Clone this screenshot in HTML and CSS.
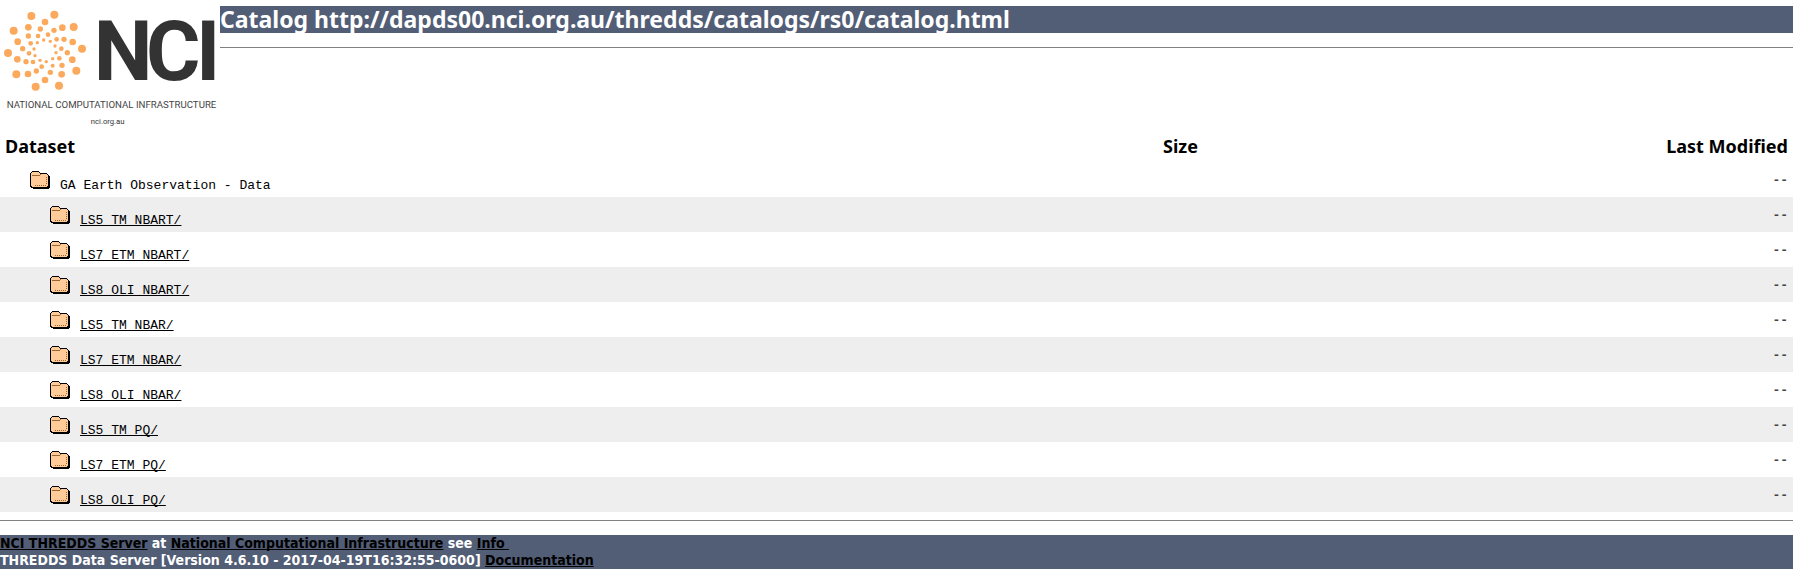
FILE: index.html
```
<!DOCTYPE html>
<html lang="en">
<head>
<meta charset="utf-8">
<title>Catalog http://dapds00.nci.org.au/thredds/catalogs/rs0/catalog.html</title>
<link rel="stylesheet" href="styles.css">
</head>
<body>
<svg class="defs" aria-hidden="true">
  <symbol id="folder" viewBox="0 0 20 18">
    <path fill="#000" d="M2 0h7v1h1v1h7v1h1v1h1v1h1v12h-1v1H3v-1H1v-1H0V2h1V1h1z"/>
    <path fill="#ffcc99" d="M2 1h7v1h1v1h7v1h1v11h-1v1H2v-1H1V2h1z"/>
    <path stroke="#996633" fill="none" d="M2 4.500h8M10 3.500h1"/>
    <path stroke="#996633" fill="none" stroke-dasharray="1 1" d="M5 14.500h12M16.500 6v8"/>
  </symbol>
</svg>
<header class="top">
  <svg class="logo" viewBox="0 0 660 390" role="img" aria-label="NCI National Computational Infrastructure">
    <g fill="#fba95c">
      <g><circle cx="94" cy="48" r="12"/><circle cx="163" cy="44" r="12"/><circle cx="221" cy="81" r="12"/><circle cx="246" cy="146" r="12"/><circle cx="229" cy="212" r="12"/><circle cx="177" cy="257" r="12"/><circle cx="107" cy="260" r="12"/><circle cx="49" cy="223" r="12"/><circle cx="24" cy="159" r="12"/><circle cx="41" cy="92" r="12"/></g>
      <g><circle cx="135" cy="66" r="10"/><circle cx="187" cy="83" r="10"/><circle cx="218" cy="126" r="10"/><circle cx="217" cy="179" r="10"/><circle cx="185" cy="223" r="10"/><circle cx="135" cy="240" r="10"/><circle cx="84" cy="222" r="10"/><circle cx="52" cy="178" r="10"/><circle cx="53" cy="125" r="10"/><circle cx="85" cy="82" r="10"/></g>
      <g><circle cx="121" cy="87" r="8"/><circle cx="162" cy="91" r="8"/><circle cx="192" cy="118" r="8"/><circle cx="202" cy="158" r="8"/><circle cx="186" cy="196" r="8"/><circle cx="151" cy="217" r="8"/><circle cx="109" cy="213" r="8"/><circle cx="78" cy="185" r="8"/><circle cx="68" cy="146" r="8"/><circle cx="85" cy="108" r="8"/></g>
      <g><circle cx="114" cy="108" r="7"/><circle cx="144" cy="104" r="7"/><circle cx="170" cy="118" r="7"/><circle cx="184" cy="146" r="7"/><circle cx="178" cy="175" r="7"/><circle cx="158" cy="197" r="6"/><circle cx="125" cy="200" r="7"/><circle cx="99" cy="186" r="7"/><circle cx="87" cy="160" r="7"/><circle cx="92" cy="130" r="7"/></g>
      <g><circle cx="131" cy="120" r="5"/><circle cx="151" cy="124" r="5"/><circle cx="165" cy="138" r="5"/><circle cx="168" cy="158" r="5"/><circle cx="158" cy="176" r="5"/><circle cx="139" cy="185" r="5"/><circle cx="120" cy="181" r="5"/><circle cx="105" cy="167" r="5"/><circle cx="102" cy="147" r="5"/><circle cx="112" cy="128" r="5"/></g>
    </g>
    <text class="logo-name" x="281 438 588" y="241">NCI</text>
    <text class="logo-tag" x="20" y="325">NATIONAL COMPUTATIONAL INFRASTRUCTURE</text>
    <text class="logo-url" x="323" y="371">nci.org.au</text>
  </svg>
  <div class="heading">
    <h1>Catalog http://dapds00.nci.org.au/thredds/catalogs/rs0/catalog.html</h1>
    <hr>
  </div>
</header>
<table class="catalog">
  <thead>
    <tr><th class="name" scope="col">Dataset</th><th class="size" scope="col">Size</th><th class="date" scope="col">Last Modified</th></tr>
  </thead>
  <tbody>
    <tr><td class="root"><div class="entry"><svg class="folder"><use href="#folder"/></svg><span>GA Earth Observation - Data</span></div></td><td></td><td class="date">--</td></tr>
    <tr><td><div class="entry"><svg class="folder"><use href="#folder"/></svg><a href="#">LS5_TM_NBART/</a></div></td><td></td><td class="date">--</td></tr>
    <tr><td><div class="entry"><svg class="folder"><use href="#folder"/></svg><a href="#">LS7_ETM_NBART/</a></div></td><td></td><td class="date">--</td></tr>
    <tr><td><div class="entry"><svg class="folder"><use href="#folder"/></svg><a href="#">LS8_OLI_NBART/</a></div></td><td></td><td class="date">--</td></tr>
    <tr><td><div class="entry"><svg class="folder"><use href="#folder"/></svg><a href="#">LS5_TM_NBAR/</a></div></td><td></td><td class="date">--</td></tr>
    <tr><td><div class="entry"><svg class="folder"><use href="#folder"/></svg><a href="#">LS7_ETM_NBAR/</a></div></td><td></td><td class="date">--</td></tr>
    <tr><td><div class="entry"><svg class="folder"><use href="#folder"/></svg><a href="#">LS8_OLI_NBAR/</a></div></td><td></td><td class="date">--</td></tr>
    <tr><td><div class="entry"><svg class="folder"><use href="#folder"/></svg><a href="#">LS5_TM_PQ/</a></div></td><td></td><td class="date">--</td></tr>
    <tr><td><div class="entry"><svg class="folder"><use href="#folder"/></svg><a href="#">LS7_ETM_PQ/</a></div></td><td></td><td class="date">--</td></tr>
    <tr><td><div class="entry"><svg class="folder"><use href="#folder"/></svg><a href="#">LS8_OLI_PQ/</a></div></td><td></td><td class="date">--</td></tr>
  </tbody>
</table>
<hr class="end">
<footer class="server">
  <a href="#">NCI THREDDS Server</a> at <a href="#">National Computational Infrastructure</a> see <a href="#">Info&nbsp;</a><br>
  THREDDS Data Server [Version 4.6.10 - 2017-04-19T16:32:55-0600] <a href="#">Documentation</a>
</footer>
</body>
</html>
```
FILE: styles.css
```
body {
  margin: 0 3px 0 0;
  background: #fff;
  color: #000;
  font-family: Tahoma, "Noto Sans", sans-serif;
  font-size: 16px;
}
.defs { display: none; }
a { color: #000; text-decoration-skip-ink: none; }
hr {
  margin: 0;
  border: 0;
  border-top: 1px solid #808080;
}
.top {
  display: flex;
  align-items: flex-start;
}
.logo {
  flex: none;
  width: 220px;
  height: 130px;
  overflow: visible;
}
.heading { flex: 1; padding-top: 6px; }
h1 {
  margin: 0 0 14px;
  background: #525d76;
  color: #fff;
  font-size: 23px;
  line-height: 27px;
}
.logo-name { font: 700 250px Roboto, sans-serif; fill: #333; }
.logo-tag { font: 400 29px Roboto, sans-serif; fill: #444; }
.logo-url { font: 400 23px Roboto, sans-serif; fill: #333; text-anchor: middle; }
.catalog {
  width: 100%;
  border-collapse: collapse;
  table-layout: fixed;
}
th {
  height: 32px;
  padding: 0 5px;
  font-size: 18px;
  line-height: 24px;
  text-align: center;
}
th.name { width: 62%; text-align: left; }
th.size { width: 6%; }
th.date { text-align: right; }
td {
  height: 26px;
  padding: 9px 0 0 50px;
  vertical-align: top;
}
td.root { padding-left: 30px; }
tbody tr:nth-child(even) { background: #eee; }
.entry {
  display: flex;
  align-items: baseline;
  gap: 10px;
}
.entry, td.date { font: 13px/16px "Liberation Mono", monospace; }
.folder { width: 20px; height: 18px; }
td.date {
  height: 24px;
  padding: 11px 5px 0;
  color: #444;
  font-weight: 700;
  text-align: right;
}
.end { margin: 8px 0 14px; }
.server {
  background: #525d76;
  color: #fff;
  font-family: Tahoma, "DejaVu Sans Condensed", sans-serif;
  font-size: 14px;
  font-weight: 700;
  line-height: 17px;
}
```
